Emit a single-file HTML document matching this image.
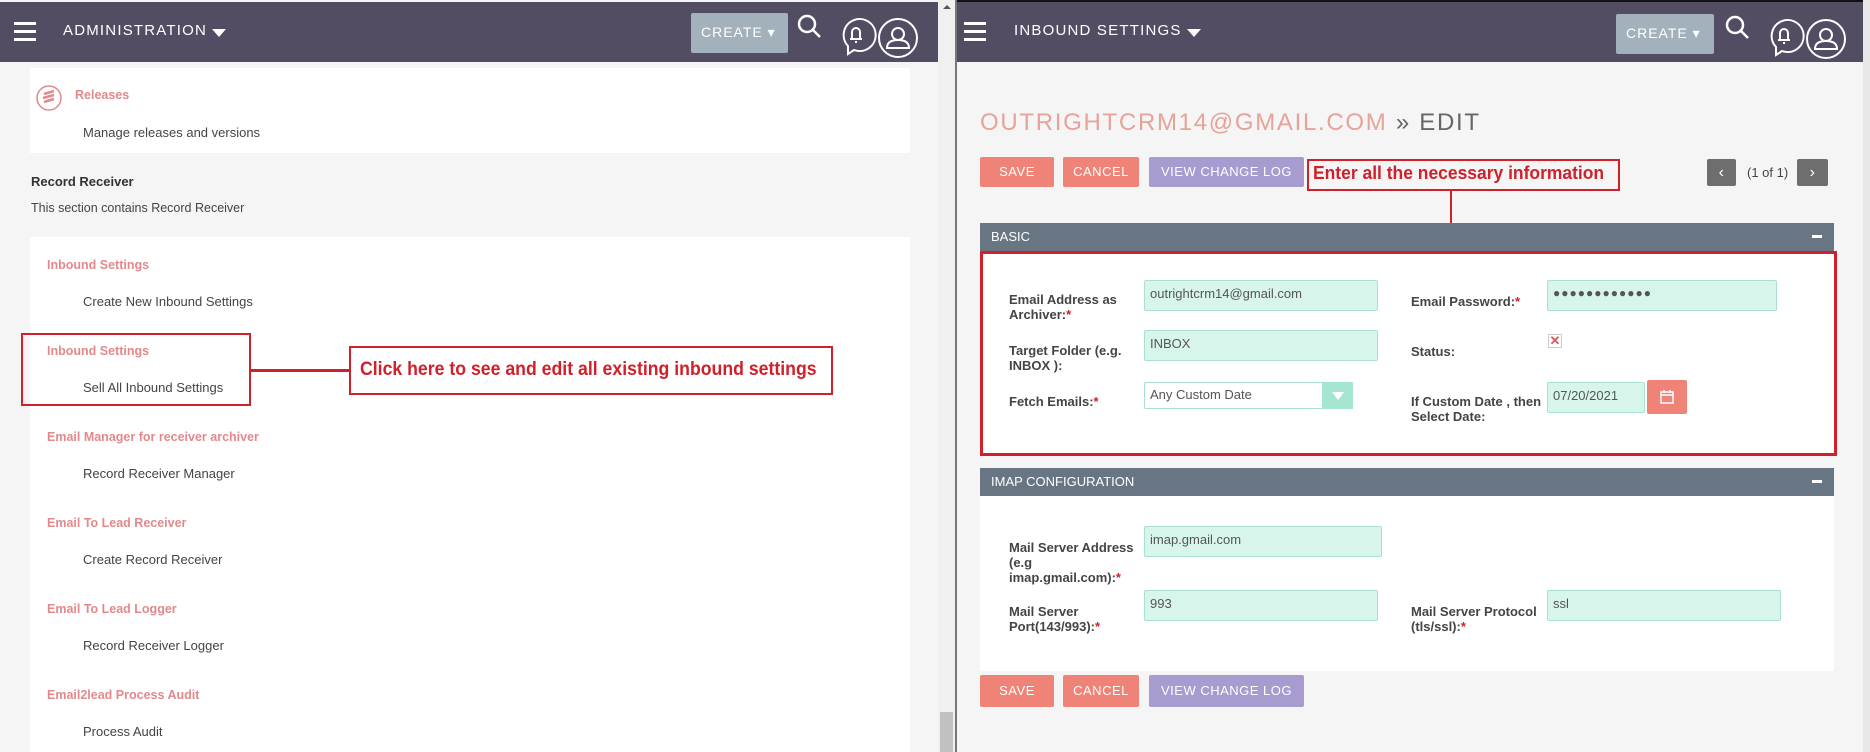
<!DOCTYPE html>
<html><head><meta charset="utf-8"><style>
*{margin:0;padding:0;box-sizing:border-box}
body{width:1870px;height:752px;position:relative;overflow:hidden;background:#f5f5f5;font-family:"Liberation Sans",sans-serif;font-size:13px;color:#333}
.a{position:absolute;white-space:nowrap}
.nav{position:absolute;top:2px;height:60px;background:#534d64}
.ham{position:absolute;width:22px;height:3px;background:#fff}
.ntitle{position:absolute;color:#fff;font-size:15px;letter-spacing:1.2px;top:22px}
.ntitle:after{content:"";display:inline-block;margin-left:5px;border-left:7px solid transparent;border-right:7px solid transparent;border-top:8px solid #fff;vertical-align:-2px}
.create{position:absolute;background:#a2b1bb;color:#fff;font-size:14px;letter-spacing:1px;padding:11px 0 0 10px;border-radius:2px}
.card{position:absolute;background:#fff}
.lk{position:absolute;color:#e3898c;font-weight:bold;font-size:12.5px;white-space:nowrap}
.sub{position:absolute;color:#444;font-size:13px;white-space:nowrap}
.rb{position:absolute;border:2px solid #d0202a}
.rt{position:absolute;color:#d0202a;font-weight:bold;font-size:19px;white-space:nowrap;transform-origin:left top}
.btn{position:absolute;color:#fff;font-size:13px;text-align:center;border-radius:2px;letter-spacing:.5px}
.sal{background:#f08377}.pur{background:#a89bd0}
.hdr{position:absolute;background:#687582;color:#fff;font-size:13px;padding-left:11px}
.lbl{position:absolute;font-weight:bold;color:#444;font-size:13px;line-height:15px}
.req{color:#d0202a}
.inp{position:absolute;background:#d8f5ec;border:1px solid #a8e2cf;border-radius:2px;font-size:13px;color:#555;padding:5px 0 0 5px}
</style></head><body>
<!-- LEFT -->
<div class="nav" style="left:0;width:938px"></div>
<div class="ham" style="left:14px;top:22px"></div><div class="ham" style="left:14px;top:30px"></div><div class="ham" style="left:14px;top:38px"></div>
<div class="ntitle" style="left:63px">ADMINISTRATION</div>
<div class="create" style="left:691px;top:13px;width:97px;height:40px">CREATE &#9662;</div>
<svg class="a" style="left:796px;top:10px" width="140" height="50" fill="none" stroke="#fff" stroke-width="2.5">
<circle cx="11" cy="14" r="8"/><line x1="17" y1="20" x2="24" y2="27"/>
<path d="M52 36 A16 16 0 1 1 58 40 L52 44 Z" stroke-width="2"/><path d="M54 29 h12 M56 29 v-7 a4 4 0 0 1 8 0 v7 M60 31 v2" stroke-width="2"/>
<circle cx="102" cy="28" r="19" stroke-width="2"/><circle cx="102" cy="24" r="6" stroke-width="2"/><path d="M91 38 q0 -8 11 -8 q11 0 11 8 z" stroke-width="2"/>
</svg>
<div class="card" style="left:30px;top:68px;width:880px;height:85px"></div>
<svg class="a" style="left:36px;top:84px" width="28" height="28"><circle cx="13" cy="14" r="12" fill="none" stroke="#e3898c" stroke-width="1.5"/><path d="M8 10 l10 -3 M7 14 l11 -3 M8 18 l10 -3" stroke="#e3898c" stroke-width="2.5"/></svg>
<div class="lk" style="left:75px;top:88px">Releases</div>
<div class="sub" style="left:83px;top:125px">Manage releases and versions</div>
<div class="a" style="left:31px;top:174px;font-weight:bold;color:#333;font-size:13px">Record Receiver</div>
<div class="a" style="left:31px;top:201px;color:#444;font-size:12.5px">This section contains Record Receiver</div>
<div class="card" style="left:30px;top:237px;width:880px;height:515px"></div>
<div class="lk" style="left:47px;top:258px">Inbound Settings</div>
<div class="sub" style="left:83px;top:294px">Create New Inbound Settings</div>
<div class="lk" style="left:47px;top:344px">Inbound Settings</div>
<div class="sub" style="left:83px;top:380px">Sell All Inbound Settings</div>
<div class="lk" style="left:47px;top:430px">Email Manager for receiver archiver</div>
<div class="sub" style="left:83px;top:466px">Record Receiver Manager</div>
<div class="lk" style="left:47px;top:516px">Email To Lead Receiver</div>
<div class="sub" style="left:83px;top:552px">Create Record Receiver</div>
<div class="lk" style="left:47px;top:602px">Email To Lead Logger</div>
<div class="sub" style="left:83px;top:638px">Record Receiver Logger</div>
<div class="lk" style="left:47px;top:688px">Email2lead Process Audit</div>
<div class="sub" style="left:83px;top:724px">Process Audit</div>
<div class="rb" style="left:21px;top:333px;width:230px;height:73px"></div>
<div class="a" style="left:250px;top:369px;width:100px;height:3px;background:#d0202a"></div>
<div class="rb" style="left:349px;top:346px;width:484px;height:49px"></div>
<div class="rt" style="left:360px;top:359px;transform:scaleX(0.93)">Click here to see and edit all existing inbound settings</div>
<!-- scrollbar -->
<div class="a" style="left:938px;top:0;width:17px;height:752px;background:#f0f0f0"></div>
<div class="a" style="left:943px;top:5px;border-left:4px solid transparent;border-right:4px solid transparent;border-bottom:4px solid #555"></div>
<div class="a" style="left:940px;top:712px;width:13px;height:40px;background:#c1c1c1"></div>
<div class="a" style="left:955px;top:0;width:2px;height:752px;background:#777"></div>
<!-- RIGHT -->
<div class="a" style="left:957px;top:0;width:913px;height:2px;background:#111"></div>
<div class="nav" style="left:957px;width:906px"></div>
<div class="a" style="left:1863px;top:0;width:7px;height:752px;background:#e8e8e8"></div>
<div class="ham" style="left:964px;top:22px"></div><div class="ham" style="left:964px;top:30px"></div><div class="ham" style="left:964px;top:38px"></div>
<div class="ntitle" style="left:1014px">INBOUND SETTINGS</div>
<div class="create" style="left:1616px;top:14px;width:98px;height:40px">CREATE &#9662;</div>
<svg class="a" style="left:1724px;top:11px" width="140" height="50" fill="none" stroke="#fff" stroke-width="2.5">
<circle cx="11" cy="14" r="8"/><line x1="17" y1="20" x2="24" y2="27"/>
<path d="M52 36 A16 16 0 1 1 58 40 L52 44 Z" stroke-width="2"/><path d="M54 29 h12 M56 29 v-7 a4 4 0 0 1 8 0 v7 M60 31 v2" stroke-width="2"/>
<circle cx="102" cy="28" r="19" stroke-width="2"/><circle cx="102" cy="24" r="6" stroke-width="2"/><path d="M91 38 q0 -8 11 -8 q11 0 11 8 z" stroke-width="2"/>
</svg>
<div class="a" style="left:980px;top:109px;font-size:24px;letter-spacing:1.7px;color:#e7a39a">OUTRIGHTCRM14@GMAIL.COM <span style="color:#666">» EDIT</span></div>
<div class="btn sal" style="left:980px;top:157px;width:74px;height:30px;line-height:30px">SAVE</div>
<div class="btn sal" style="left:1063px;top:157px;width:76px;height:30px;line-height:30px">CANCEL</div>
<div class="btn pur" style="left:1149px;top:157px;width:155px;height:30px;line-height:30px">VIEW CHANGE LOG</div>
<div class="rb" style="left:1307px;top:159px;width:313px;height:32px"></div>
<div class="rt" style="left:1313px;top:163px;font-size:18px;transform:scaleX(0.97)">Enter all the necessary information</div>
<div class="a" style="left:1450px;top:191px;width:2px;height:62px;background:#d0202a"></div>
<div class="btn" style="left:1707px;top:159px;width:29px;height:27px;line-height:27px;background:#6e6e6e;font-size:16px">‹</div>
<div class="a" style="left:1747px;top:165px;color:#444;font-size:13px">(1 of 1)</div>
<div class="btn" style="left:1797px;top:159px;width:31px;height:27px;line-height:27px;background:#6e6e6e;font-size:16px">›</div>
<div class="hdr" style="left:980px;top:223px;width:854px;height:28px;line-height:28px">BASIC<span style="position:absolute;right:12px;top:12px;width:10px;height:3px;background:#fff"></span></div>
<div class="card" style="left:980px;top:251px;width:854px;height:205px"></div>
<div class="rb" style="left:980px;top:251px;width:857px;height:205px;border-width:3px"></div>
<div class="lbl" style="left:1009px;top:292px">Email Address as<br>Archiver:<span class="req">*</span></div>
<div class="inp" style="left:1144px;top:280px;width:234px;height:31px">outrightcrm14@gmail.com</div>
<div class="lbl" style="left:1411px;top:294px">Email Password:<span class="req">*</span></div>
<div class="inp" style="left:1547px;top:280px;width:230px;height:31px;font-size:12px;letter-spacing:1px">&#9679;&#9679;&#9679;&#9679;&#9679;&#9679;&#9679;&#9679;&#9679;&#9679;&#9679;&#9679;</div>
<div class="lbl" style="left:1009px;top:343px">Target Folder (e.g.<br>INBOX ):</div>
<div class="inp" style="left:1144px;top:330px;width:234px;height:31px">INBOX</div>
<div class="lbl" style="left:1411px;top:344px">Status:</div>
<div class="a" style="left:1548px;top:334px;width:14px;height:14px;border:1px solid #ccc;color:#e05555;font-size:13px;line-height:12px;text-align:center;font-weight:bold">✕</div>
<div class="lbl" style="left:1009px;top:394px">Fetch Emails:<span class="req">*</span></div>
<div class="inp" style="left:1144px;top:382px;width:209px;height:27px;background:#fff;padding-top:4px">Any Custom Date</div>
<div class="a" style="left:1322px;top:382px;width:31px;height:27px;background:#a5e6d3"><div style="margin:10px auto 0;width:0;border-left:6px solid transparent;border-right:6px solid transparent;border-top:8px solid #fff"></div></div>
<div class="lbl" style="left:1411px;top:394px">If Custom Date , then<br>Select Date:</div>
<div class="inp" style="left:1547px;top:382px;width:98px;height:31px">07/20/2021</div>
<div class="btn sal" style="left:1647px;top:380px;width:40px;height:34px"><svg width="16" height="16" style="margin-top:9px" fill="none" stroke="#fff" stroke-width="1.5"><rect x="2" y="3" width="12" height="11"/><line x1="2" y1="6" x2="14" y2="6"/><line x1="5" y1="1" x2="5" y2="4"/><line x1="11" y1="1" x2="11" y2="4"/></svg></div>
<div class="hdr" style="left:980px;top:468px;width:854px;height:28px;line-height:28px">IMAP CONFIGURATION<span style="position:absolute;right:12px;top:12px;width:10px;height:3px;background:#fff"></span></div>
<div class="card" style="left:980px;top:496px;width:854px;height:175px"></div>
<div class="lbl" style="left:1009px;top:540px">Mail Server Address<br>(e.g<br>imap.gmail.com):<span class="req">*</span></div>
<div class="inp" style="left:1144px;top:526px;width:238px;height:31px">imap.gmail.com</div>
<div class="lbl" style="left:1009px;top:604px">Mail Server<br>Port(143/993):<span class="req">*</span></div>
<div class="inp" style="left:1144px;top:590px;width:234px;height:31px">993</div>
<div class="lbl" style="left:1411px;top:604px">Mail Server Protocol<br>(tls/ssl):<span class="req">*</span></div>
<div class="inp" style="left:1547px;top:590px;width:234px;height:31px">ssl</div>
<div class="btn sal" style="left:980px;top:675px;width:74px;height:32px;line-height:32px">SAVE</div>
<div class="btn sal" style="left:1063px;top:675px;width:76px;height:32px;line-height:32px">CANCEL</div>
<div class="btn pur" style="left:1149px;top:675px;width:155px;height:32px;line-height:32px">VIEW CHANGE LOG</div>
</body></html>
